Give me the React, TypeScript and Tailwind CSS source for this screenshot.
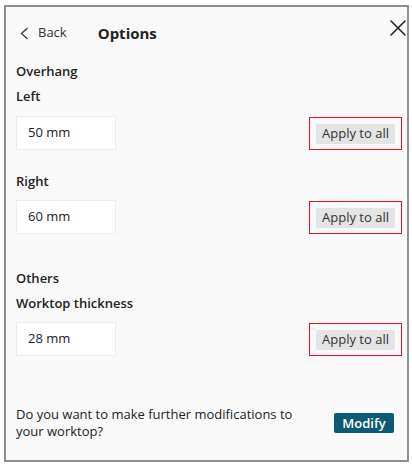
import { X } from 'lucide-react'

const font = { fontFamily: '"Open Sans", "Liberation Sans", sans-serif' }

function ApplyRow({ value }: { value: string }) {
  return (
    <div className="flex items-end justify-between">
      <div className="w-[100px] h-[34px] bg-white border border-[#ececec] flex items-center pl-[11px] text-[13px] text-[#222]">
        {value}
      </div>
      <div className="w-[93px] h-[33px] ring-1 ring-inset ring-[#e8141c] flex items-center justify-center mr-[-5px]">
        <button className="h-[20px] px-[6px] bg-[#e4e4e4] rounded-[2px] text-[13px] text-[#333] leading-none">
          Apply to all
        </button>
      </div>
    </div>
  )
}

export default function App() {
  return (
    <div className="w-[412px] h-[465px] bg-white pt-[5px] pl-[4px]" style={font}>
      <div className="relative w-[405px] h-[457px] border-2 border-[#8f8f8f] bg-[#f9f9f9] flex flex-col px-[10px] text-[#222]">
        <X className="absolute left-[378px] top-[7px] w-[28px] h-[28px] text-[#222]" strokeWidth={1.3} />
        <div className="flex items-center h-[20px] mt-[16px]">
          <svg width="9" height="13" viewBox="0 0 9 13" className="ml-[4px]" fill="none">
            <polyline points="7.5,1 1.5,6.5 7.5,12" stroke="#333" strokeWidth="1.2" />
          </svg>
          <span className="text-[13px] ml-[9px] text-[#333]">Back</span>
          <span className="text-[15px] font-bold ml-[31px] text-[#222]">Options</span>
        </div>
        <div className="text-[13px] font-semibold mt-[19px] leading-[18px]">Overhang</div>
        <div className="text-[13px] font-semibold mt-[7px] leading-[18px]">Left</div>
        <div className="mt-[11px]">
          <ApplyRow value="50 mm" />
        </div>
        <div className="text-[13px] font-semibold mt-[22px] leading-[18px]">Right</div>
        <div className="mt-[10px]">
          <ApplyRow value="60 mm" />
        </div>
        <div className="text-[13px] font-semibold mt-[35px] leading-[18px]">Others</div>
        <div className="text-[13px] font-semibold mt-[7px] leading-[18px]">Worktop thickness</div>
        <div className="mt-[10px]">
          <ApplyRow value="28 mm" />
        </div>
        <div className="flex items-center justify-between mt-[50px]">
          <p className="text-[13px] leading-[17px] text-[#222] w-[290px]">
            Do you want to make further modifications to your worktop?
          </p>
          <button className="h-[20px] w-[60px] bg-[#0b5b72] text-white text-[13px] font-semibold rounded-[2px] mr-[3px] leading-none">
            Modify
          </button>
        </div>
      </div>
    </div>
  )
}
